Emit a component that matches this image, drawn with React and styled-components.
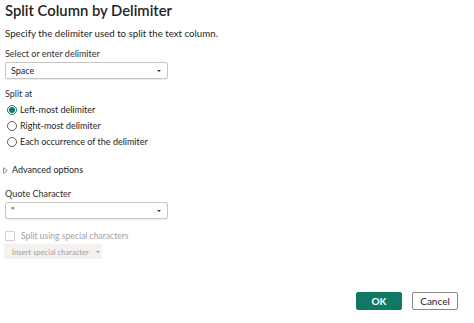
import React from "react";
import styled, { createGlobalStyle } from "styled-components";

const Global = createGlobalStyle`
  html, body { margin: 0; padding: 0; background: #fff; }
  body { font-family: "Segoe UI", Lato, "Open Sans", sans-serif; color: #252423; }
`;

const Dialog = styled.div`
  width: 474px;
  height: 323px;
  box-sizing: border-box;
  padding: 1px 16px 0 5px;
  display: flex;
  flex-direction: column;
  overflow: hidden;
`;

const Title = styled.h1`
  margin: 0;
  font-size: 14.8px;
  font-weight: 600;
  line-height: 18px;
  color: #252423;
`;

const Description = styled.p`
  margin: 8px 0 0 0;
  font-size: 9.7px;
  line-height: 13px;
  color: #252423;
`;

const Label = styled.div`
  margin-top: ${(p) => p.$mt || 0}px;
  font-size: 9px;
  line-height: 12px;
  color: #323130;
`;

const SelectBox = styled.div`
  margin-top: 2px;
  width: 163px;
  height: 17px;
  box-sizing: border-box;
  border: 1px solid #c8c6c4;
  border-radius: 2px;
  display: flex;
  align-items: center;
  justify-content: space-between;
  padding: 0 6px 0 5px;
  font-size: 9px;
  color: #252423;
  box-shadow: 0 1px 1px rgba(0, 0, 0, 0.08);
`;

const Caret = styled.span`
  width: 0;
  height: 0;
  border-left: 2px solid transparent;
  border-right: 2px solid transparent;
  border-top: 2.5px solid ${(p) => (p.$disabled ? "#a19f9d" : "#323130")};
`;

const RadioGroup = styled.div`
  margin-top: 3px;
  display: flex;
  flex-direction: column;
  gap: 3px;
`;

const RadioRow = styled.label`
  display: flex;
  align-items: center;
  gap: 3px;
  height: 13px;
  font-size: 9px;
  color: #252423;
  padding-left: 2px;
`;

const RadioCircle = styled.span`
  width: 10px;
  height: 10px;
  box-sizing: border-box;
  border-radius: 50%;
  border: 1px solid ${(p) => (p.$checked ? "#117865" : "#605e5c")};
  display: flex;
  align-items: center;
  justify-content: center;
  &::after {
    content: "";
    display: ${(p) => (p.$checked ? "block" : "none")};
    width: 6px;
    height: 6px;
    border-radius: 50%;
    background: #117865;
  }
`;

const Advanced = styled.div`
  margin-top: 16px;
  margin-left: -2px;
  display: flex;
  align-items: center;
  gap: 4px;
  font-size: 9px;
  line-height: 12px;
  color: #252423;
`;

const CheckRow = styled.div`
  margin-top: 11px;
  display: flex;
  align-items: center;
  gap: 6px;
  font-size: 8.6px;
  line-height: 12px;
  color: #a19f9d;
`;

const CheckBox = styled.span`
  width: 10px;
  height: 10px;
  box-sizing: border-box;
  border: 1px solid #d2d0ce;
  border-radius: 1px;
`;

const SpecialButton = styled.div`
  margin-top: 2px;
  margin-left: -1px;
  width: 98px;
  height: 15px;
  box-sizing: border-box;
  background: #f3f2f1;
  display: flex;
  align-items: center;
  gap: 7px;
  padding-left: 8px;
  font-size: 7.6px;
  white-space: nowrap;
  color: #a19f9d;
`;

const Footer = styled.div`
  margin-top: auto;
  margin-bottom: 13px;
  display: flex;
  justify-content: flex-end;
  gap: 10px;
`;

const Button = styled.button`
  width: 46px;
  height: 18px;
  box-sizing: border-box;
  border-radius: 2px;
  font-family: inherit;
  font-size: 10px;
  font-weight: ${(p) => (p.$primary ? 700 : 400)};
  padding: 0;
  border: 1px solid ${(p) => (p.$primary ? "#117865" : "#8a8886")};
  background: ${(p) => (p.$primary ? "#117865" : "#fff")};
  color: ${(p) => (p.$primary ? "#fff" : "#252423")};
`;

const TriangleIcon = () => (
  <svg width="5" height="7" viewBox="0 0 5 7">
    <path d="M0.5 0.7 L4.3 3.5 L0.5 6.3 Z" fill="none" stroke="#8a8886" strokeWidth="0.9" />
  </svg>
);

export default function App() {
  return (
    <>
      <Global />
      <Dialog>
        <Title>Split Column by Delimiter</Title>
        <Description>Specify the delimiter used to split the text column.</Description>
        <Label $mt={8}>Select or enter delimiter</Label>
        <SelectBox>
          <span>Space</span>
          <Caret />
        </SelectBox>
        <Label $mt={9}>Split at</Label>
        <RadioGroup>
          <RadioRow><RadioCircle $checked />Left-most delimiter</RadioRow>
          <RadioRow><RadioCircle />Right-most delimiter</RadioRow>
          <RadioRow><RadioCircle />Each occurrence of the delimiter</RadioRow>
        </RadioGroup>
        <Advanced><TriangleIcon />Advanced options</Advanced>
        <Label $mt={12}>Quote Character</Label>
        <SelectBox>
          <span>"</span>
          <Caret />
        </SelectBox>
        <CheckRow><CheckBox />Split using special characters</CheckRow>
        <SpecialButton>Insert special character<Caret $disabled /></SpecialButton>
        <Footer>
          <Button $primary>OK</Button>
          <Button>Cancel</Button>
        </Footer>
      </Dialog>
    </>
  );
}
